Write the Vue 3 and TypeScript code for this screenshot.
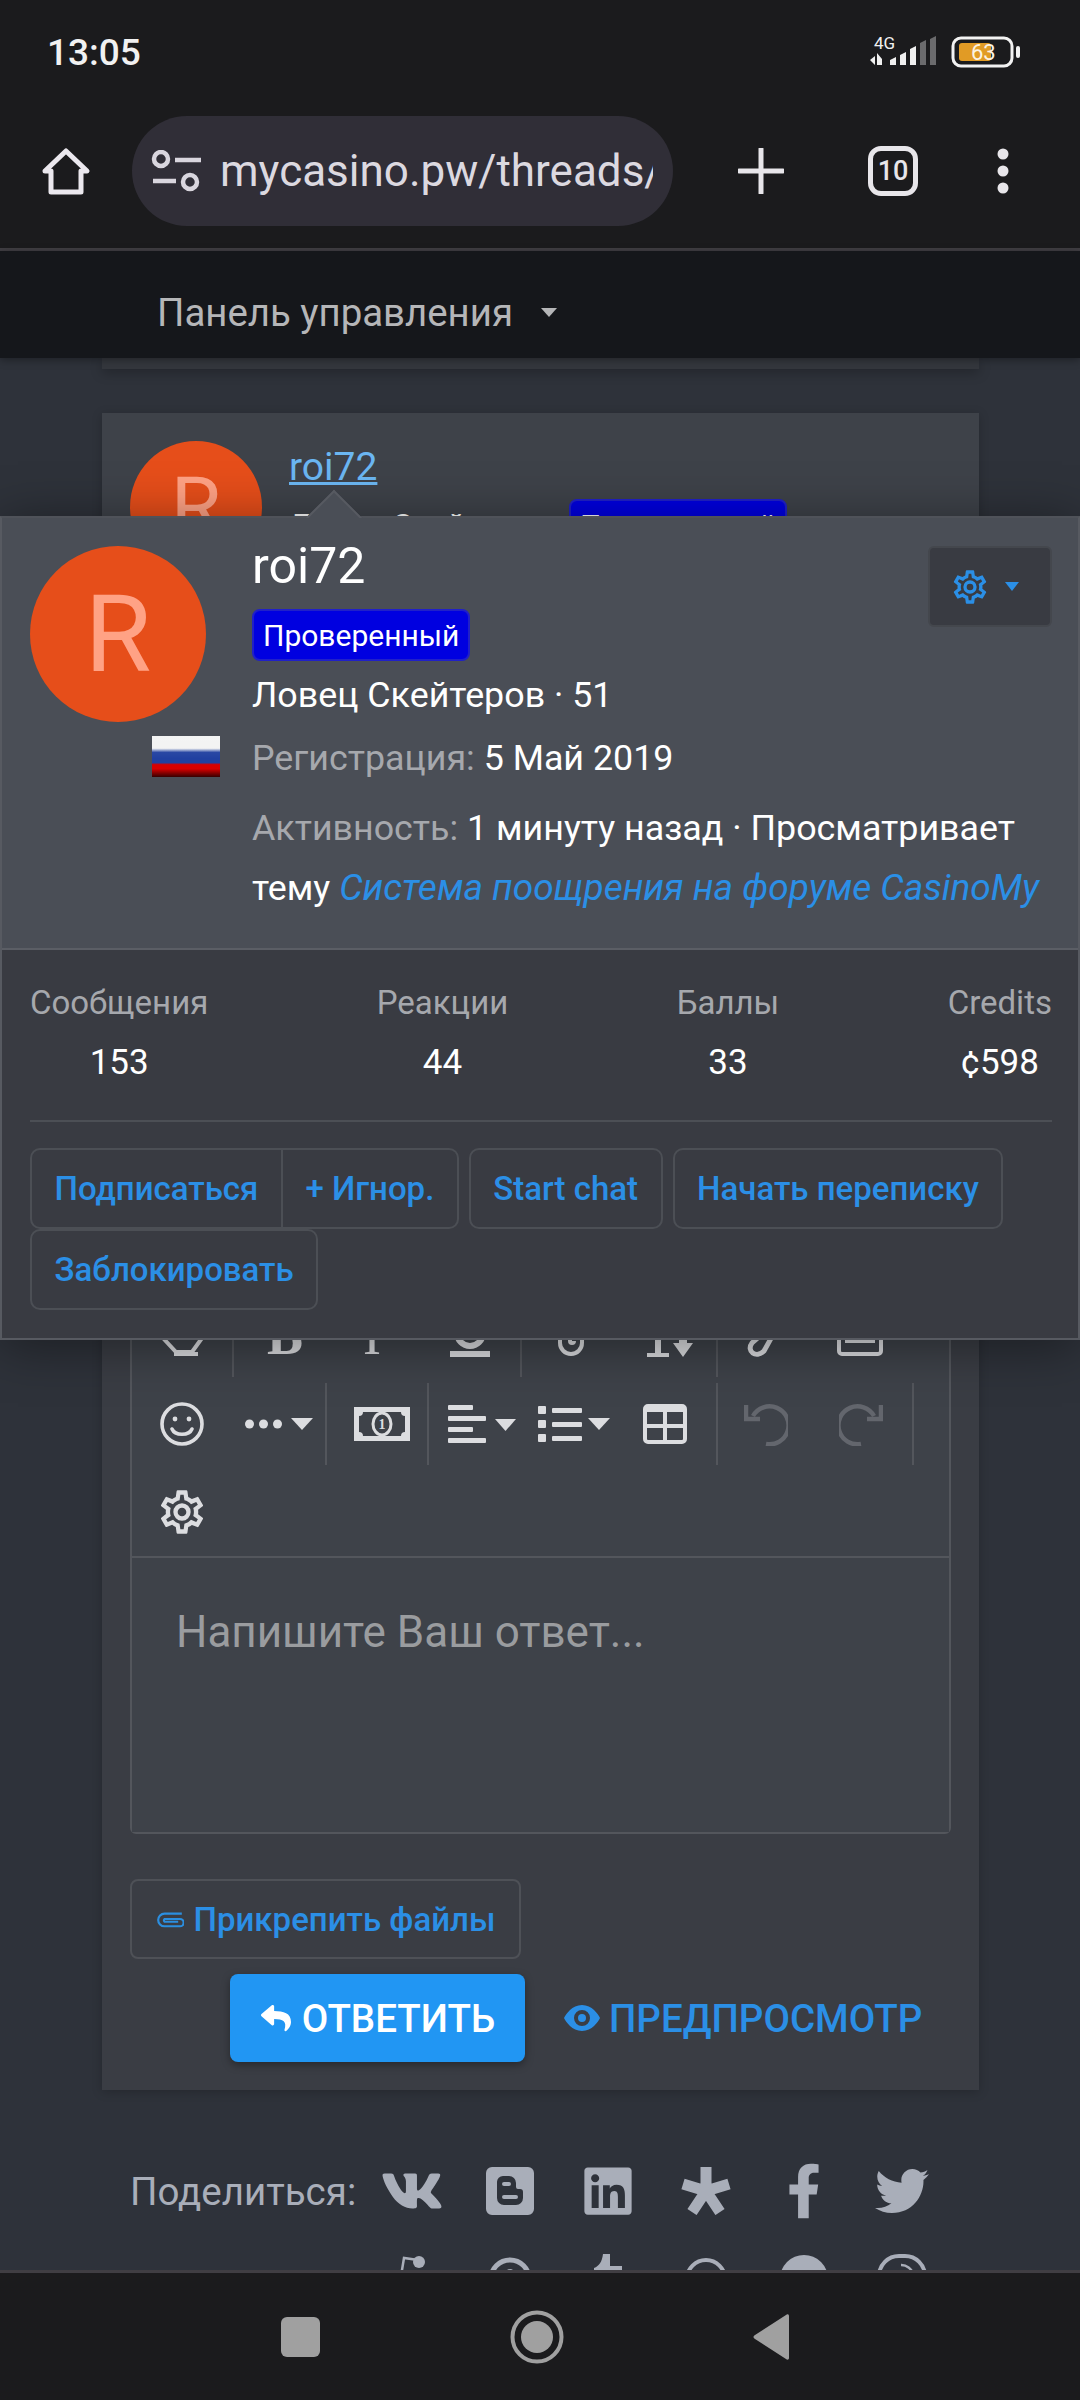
<script setup lang="ts">
const cogPath =
  'M12,8A4,4 0 0,1 16,12A4,4 0 0,1 12,16A4,4 0 0,1 8,12A4,4 0 0,1 12,8M12,10A2,2 0 0,0 10,12A2,2 0 0,0 12,14A2,2 0 0,0 14,12A2,2 0 0,0 12,10M10,22C9.75,22 9.54,21.82 9.5,21.58L9.13,18.93C8.5,18.68 7.96,18.34 7.44,17.94L4.95,18.95C4.73,19.03 4.46,18.95 4.34,18.73L2.34,15.27C2.21,15.05 2.27,14.78 2.46,14.63L4.57,12.97L4.5,12L4.57,11L2.46,9.37C2.27,9.22 2.21,8.95 2.34,8.73L4.34,5.27C4.46,5.05 4.73,4.96 4.95,5.05L7.44,6.05C7.96,5.66 8.5,5.32 9.13,5.07L9.5,2.42C9.54,2.18 9.75,2 10,2H14C14.25,2 14.46,2.18 14.5,2.42L14.87,5.07C15.5,5.32 16.04,5.66 16.56,6.05L19.05,5.05C19.27,4.96 19.54,5.05 19.66,5.27L21.66,8.73C21.79,8.95 21.73,9.22 21.54,9.37L19.43,11L19.5,12L19.43,13L21.54,14.63C21.73,14.78 21.79,15.05 21.66,15.27L19.66,18.73C19.54,18.95 19.27,19.04 19.05,18.95L16.56,17.95C16.04,18.34 15.5,18.68 14.87,18.93L14.5,21.58C14.46,21.82 14.25,22 14,22H10M11.25,4L10.88,6.61C9.68,6.86 8.62,7.5 7.85,8.39L5.44,7.35L4.69,8.65L6.8,10.2C6.4,11.37 6.4,12.64 6.8,13.8L4.68,15.36L5.43,16.66L7.86,15.62C8.63,16.5 9.68,17.14 10.87,17.38L11.24,20H12.76L13.13,17.39C14.32,17.14 15.37,16.5 16.14,15.62L18.57,16.66L19.32,15.36L17.2,13.81C17.6,12.64 17.6,11.37 17.2,10.2L19.31,8.65L18.56,7.35L16.15,8.39C15.38,7.5 14.32,6.86 13.12,6.62L12.75,4H11.25Z'

const stats = [
  { label: 'Сообщения', value: '153' },
  { label: 'Реакции', value: '44' },
  { label: 'Баллы', value: '33' },
  { label: 'Credits', value: '¢598' },
]
</script>

<template>
  <div class="phone">
    <header class="chrome">
      <div class="status">
        <span class="clock">13:05</span>
        <div class="status-icons">
          <svg width="70" height="32" viewBox="0 0 70 32">
            <text x="4" y="13" class="net">4G</text>
            <path d="M0 24l5-4v9zM7 17l5 6v6H7zM12 0z" fill="#f0f0f0" />
            <path d="M20 29v-5l6-3v8zM30 29v-10l6-3v13zM40 29V13l6-3v19z" fill="#f0f0f0" />
            <path d="M50 29V7l6-3v25z" fill="#6b6b6d" />
            <path d="M60 29V3l6-3v29z" fill="#6b6b6d" />
          </svg>
          <svg width="72" height="32" viewBox="0 0 72 32">
            <rect x="2" y="2" width="59" height="28" rx="8" fill="none" stroke="#f2f2f2" stroke-width="3" />
            <rect x="8" y="7" width="32" height="18" rx="3" fill="#e19b25" />
            <text x="20" y="24" class="batt">63</text>
            <rect x="65" y="10" width="4" height="12" rx="2" fill="#f2f2f2" />
          </svg>
        </div>
      </div>
      <div class="urlbar">
        <svg class="home" width="50" height="48" viewBox="0 0 50 48">
          <path d="M25 4L46 24H40V45H10V24H4Z" fill="none" stroke="#ebe8ee" stroke-width="5" stroke-linejoin="round" />
        </svg>
        <div class="pill">
          <svg class="tune" width="50" height="42" viewBox="0 0 50 42" fill="none" stroke="#d9d6de" stroke-width="4.5">
            <circle cx="10" cy="9" r="7" />
            <path d="M24 10H50M2 31H25" />
            <circle cx="39" cy="32" r="7" />
          </svg>
          <span class="url">mycasino.pw/threads/sistema</span>
        </div>
        <svg class="plus" width="46" height="46" viewBox="0 0 46 46">
          <path d="M23 1V45M1 23H45" stroke="#e8e6ea" stroke-width="5" stroke-linecap="round" />
        </svg>
        <div class="tabs">10</div>
        <svg class="kebab" width="14" height="46" viewBox="0 0 14 46" fill="#e8e6ea">
          <circle cx="7" cy="6" r="5.5" />
          <circle cx="7" cy="23" r="5.5" />
          <circle cx="7" cy="40" r="5.5" />
        </svg>
      </div>
    </header>

    <nav class="topnav">
      <span>Панель управления</span>
      <i class="caret"></i>
    </nav>

    <main class="content">
      <div class="prev-card"></div>

      <section class="card">
        <div class="post-head">
          <div class="avatar small">R</div>
          <div class="post-user">
            <a class="post-name">roi72</a>
            <div class="post-meta">
              <span>Ловец Скейтеров</span>
              <span class="badge">Проверенный</span>
            </div>
          </div>
        </div>

        <div class="card-body">
          <div class="editor">
            <div class="tb-row">
              <span class="tb-btn w81">
                <svg width="44" height="44" viewBox="0 0 44 44"><path d="M12 10H32L42 24 32 38 H16L3 24Z M14 40H38" fill="none" stroke="#dcdde0" stroke-width="4" /></svg>
              </span>
              <i class="sep ml10"></i>
              <span class="tb-btn w102 tb-letter bold">B</span>
              <span class="tb-btn w84 pr12 tb-letter">I</span>
              <span class="tb-btn w100">
                <svg width="42" height="46" viewBox="0 0 42 46"><path d="M8 2V20A13 13 0 0 0 34 20V2" fill="none" stroke="#dcdde0" stroke-width="6" /><rect x="1" y="38" width="40" height="6" fill="#dcdde0" /></svg>
              </span>
              <i class="sep"></i>
              <span class="tb-btn w98">
                <svg width="32" height="46" viewBox="0 0 32 46"><path d="M5 8V30A11 11 0 0 0 27 30V8A6 6 0 0 0 15 8V28A1 1 0 0 0 19 28" fill="none" stroke="#dcdde0" stroke-width="4" /></svg>
              </span>
              <span class="tb-btn w96">
                <svg width="54" height="46" viewBox="0 0 54 46" fill="#dcdde0"><path d="M14 2V40H6V44H28V40H20V2z" /><path d="M38 20V30H32L42 44 52 30H46V20z" /></svg>
              </span>
              <i class="sep"></i>
              <span class="tb-btn w84">
                <svg width="32" height="46" viewBox="0 0 32 46"><path d="M26 14L8 30C2 38 12 46 20 38L30 20" fill="none" stroke="#dcdde0" stroke-width="5" /></svg>
              </span>
              <span class="tb-btn w96 pl20">
                <svg width="46" height="40" viewBox="0 0 46 40"><rect x="2" y="2" width="42" height="36" rx="3" fill="none" stroke="#dcdde0" stroke-width="4" /><rect x="8" y="22" width="30" height="5" fill="#dcdde0" /></svg>
              </span>
            </div>

            <div class="tb-row">
              <span class="tb-btn w81">
                <svg width="44" height="44" viewBox="0 0 44 44" fill="none" stroke="#dcdde0" stroke-width="3.6">
                  <circle cx="22" cy="22" r="20" />
                  <circle cx="15" cy="17" r="2.4" fill="#dcdde0" stroke="none" />
                  <circle cx="29" cy="17" r="2.4" fill="#dcdde0" stroke="none" />
                  <path d="M12 27C15 34 29 34 32 27" stroke-linecap="round" />
                </svg>
              </span>
              <span class="tb-btn w103 end">
                <svg width="68" height="16" viewBox="0 0 68 16" fill="#dcdde0">
                  <circle cx="4.5" cy="8" r="4.5" /><circle cx="18.5" cy="8" r="4.5" /><circle cx="32.5" cy="8" r="4.5" />
                  <path d="M46 2H68L57 14z" />
                </svg>
              </span>
              <i class="sep"></i>
              <span class="tb-btn w100 pl10">
                <svg width="56" height="34" viewBox="0 0 56 34">
                  <path d="M0 0H56V34H0ZM9 5Q9 9 5 9V25Q9 25 9 29H47Q47 25 51 25V9Q47 9 47 5Z" fill="#dcdde0" fill-rule="evenodd" />
                  <ellipse cx="28" cy="17" rx="9" ry="11" fill="none" stroke="#dcdde0" stroke-width="3" />
                  <text x="28" y="22" class="bill">1</text>
                </svg>
              </span>
              <i class="sep"></i>
              <span class="tb-btn w98 pl8">
                <svg width="68" height="38" viewBox="0 0 68 38" fill="#dcdde0">
                  <rect x="0" y="0" width="25" height="5" rx="1" /><rect x="0" y="11" width="38" height="5" rx="1" />
                  <rect x="0" y="22" width="25" height="5" rx="1" /><rect x="0" y="33" width="38" height="5" rx="1" />
                  <path d="M47 14H68L57.5 26z" />
                </svg>
              </span>
              <span class="tb-btn w94">
                <svg width="72" height="36" viewBox="0 0 72 36" fill="#dcdde0">
                  <rect x="0" y="0" width="8" height="8" rx="1" /><rect x="0" y="14" width="8" height="8" rx="1" /><rect x="0" y="28" width="8" height="8" rx="1" />
                  <rect x="14" y="2" width="30" height="5" rx="1" /><rect x="14" y="16" width="30" height="5" rx="1" /><rect x="14" y="30" width="30" height="5" rx="1" />
                  <path d="M50 12H72L61 24z" />
                </svg>
              </span>
              <span class="tb-btn w95 pr7">
                <svg width="44" height="40" viewBox="0 0 44 40">
                  <rect x="2" y="2" width="40" height="36" rx="3" fill="none" stroke="#dcdde0" stroke-width="4" />
                  <path d="M2 5H42" stroke="#dcdde0" stroke-width="6" />
                  <path d="M22 6V38M2 22H42" stroke="#dcdde0" stroke-width="4" />
                </svg>
              </span>
              <i class="sep"></i>
              <span class="tb-btn w96">
                <svg width="44" height="44" viewBox="0 0 44 44" fill="none" stroke="#63666d" stroke-width="4.5">
                  <path d="M9 14A19 19 0 1 1 22 42" />
                  <path d="M2 3V17H16" />
                </svg>
              </span>
              <span class="tb-btn w94">
                <svg width="44" height="44" viewBox="0 0 44 44" fill="none" stroke="#63666d" stroke-width="4.5">
                  <path d="M35 14A19 19 0 1 0 22 42" />
                  <path d="M42 3V17H28" />
                </svg>
              </span>
              <i class="sep ml4"></i>
            </div>

            <div class="tb-row last">
              <span class="tb-btn w81">
                <svg width="52" height="52" viewBox="0 0 24 24" fill="#dcdde0"><path :d="cogPath" /></svg>
              </span>
            </div>

            <div class="textarea">Напишите Ваш ответ...</div>
          </div>

          <button class="attach">
            <svg width="28" height="20" viewBox="0 0 30 22" fill="none" stroke="#2b8fe0" stroke-width="2.4">
              <path d="M28 5H9A7 7 0 0 0 9 19H26A4 4 0 0 0 26 11H9A2 2 0 0 0 9 14H24" />
            </svg>
            Прикрепить файлы
          </button>

          <div class="actions">
            <button class="reply">
              <svg width="32" height="30" viewBox="0 0 512 512" fill="#fff">
                <path d="M8.309 189.836L184.313 37.851C199.719 24.546 224 35.347 224 56.015v80.053c160.629 1.839 288 34.032 288 186.258 0 61.441-39.581 122.309-83.333 154.132-13.653 9.931-33.111-2.533-28.077-18.631 45.344-145.012-21.507-183.51-176.59-185.742V360c0 20.7-24.3 31.453-39.687 18.164l-176.004-152c-11.071-9.562-11.086-26.753 0-36.328z" />
              </svg>
              Ответить
            </button>
            <button class="preview">
              <svg width="36" height="28" viewBox="0 0 36 28">
                <path d="M18 1C28 1 34 10 36 14 34 18 28 27 18 27S2 18 0 14C2 10 8 1 18 1ZM18 6A8 8 0 1 0 18 22 8 8 0 0 0 18 6Z" fill="#2b8fe6" fill-rule="evenodd" />
                <circle cx="18" cy="14" r="4" fill="#2b8fe6" />
              </svg>
              Предпросмотр
            </button>
          </div>
        </div>
      </section>

      <section class="share">
        <span class="share-label">Поделиться:</span>
        <span class="share-ic">
          <svg width="64" height="56" viewBox="0 0 576 512"><path d="M545 117.7c3.7-12.5 0-21.7-17.8-21.7h-58.9c-15 0-21.9 7.9-25.6 16.7 0 0-30 73.7-72.4 121.5-13.7 13.7-20 18.1-27.5 18.1-3.7 0-9.4-4.4-9.4-16.9V117.7c0-15-4.2-21.7-16.6-21.7h-92.6c-9.4 0-15 7-15 13.5 0 14.2 21.2 17.5 23.4 57.5v86.8c0 19-3.4 22.5-10.9 22.5-20 0-68.6-73.4-97.4-157.4-5.8-16.3-11.5-22.9-26.6-22.9H38.8c-16.8 0-20.2 7.9-20.2 16.7 0 15.6 20 93.1 93.1 195.5C160.4 378.1 229 416 291.4 416c37.5 0 42.1-8.4 42.1-22.9 0-66.8-3.4-73.1 15.4-73.1 8.7 0 23.7 4.4 58.7 38.1 40 40 46.6 57.9 69 57.9h58.9c16.8 0 25.3-8.4 20.4-25-11.2-34.9-86.9-106.7-90.3-111.5-8.7-11.2-6.2-16.2 0-26.2.1-.1 72-101.3 79.4-135.6z" /></svg>
        </span>
        <span class="share-ic">
          <svg width="48" height="48" viewBox="0 0 48 48"><path fill-rule="evenodd" d="M6 0H42A6 6 0 0 1 48 6V42A6 6 0 0 1 42 48H6A6 6 0 0 1 0 42V6A6 6 0 0 1 6 0ZM17 9A6 6 0 0 0 11 15V31A7 7 0 0 0 18 38H30A7 7 0 0 0 37 31V25A3 3 0 0 0 34 22H32A2 2 0 0 1 30 20V16A7 7 0 0 0 23 9ZM18 15H23A1.5 1.5 0 0 1 23 19H18A1.5 1.5 0 0 1 18 15ZM18 28H30A1.5 1.5 0 0 1 30 32H18A1.5 1.5 0 0 1 18 28Z" /></svg>
        </span>
        <span class="share-ic">
          <svg width="48" height="54" viewBox="0 0 448 512"><path d="M416 32H31.9C14.3 32 0 46.5 0 64.3v383.4C0 465.5 14.3 480 31.9 480H416c17.6 0 32-14.5 32-32.3V64.3c0-17.8-14.4-32.3-32-32.3zM135.4 416H69V202.2h66.5V416zm-33.2-243c-21.3 0-38.5-17.3-38.5-38.5S80.9 96 102.2 96c21.2 0 38.5 17.3 38.5 38.5 0 21.3-17.2 38.5-38.5 38.5zm282.1 243h-66.4V312c0-24.8-.5-56.7-34.5-56.7-34.6 0-39.9 27-39.9 54.9V416h-66.4V202.2h63.7v29.2h.9c8.9-16.8 30.6-34.5 62.9-34.5 67.2 0 79.7 44.3 79.7 101.9V416z" /></svg>
        </span>
        <span class="share-ic">
          <svg width="52" height="48" viewBox="0 0 52 48"><path d="M26 0V24M26 24L3 17M26 24L49 17M26 24L12 45M26 24L40 45" fill="none" stroke="#a9aeb9" stroke-width="11" /></svg>
        </span>
        <span class="share-ic">
          <svg width="34" height="56" viewBox="0 0 320 512"><path d="M279.14 288l14.22-92.66h-88.91v-60.13c0-25.35 12.42-50.06 52.24-50.06h40.42V6.26S260.43 0 225.36 0c-73.22 0-121.08 44.38-121.08 124.72v70.62H22.89V288h81.39v224h100.17V288z" /></svg>
        </span>
        <span class="share-ic">
          <svg width="54" height="54" viewBox="0 0 512 512"><path d="M459.37 151.716c.325 4.548.325 9.097.325 13.645 0 138.72-105.583 298.558-298.558 298.558-59.452 0-114.68-17.219-161.137-47.106 8.447.974 16.568 1.299 25.34 1.299 49.055 0 94.213-16.568 130.274-44.832-46.132-.975-84.792-31.188-98.112-72.772 6.498.974 12.995 1.624 19.818 1.624 9.421 0 18.843-1.3 27.614-3.573-48.081-9.747-84.143-51.98-84.143-102.985v-1.299c13.969 7.797 30.214 12.67 47.431 13.319-28.264-18.843-46.781-51.005-46.781-87.391 0-19.492 5.197-37.36 14.294-52.954 51.655 63.675 129.3 105.258 216.365 109.807-1.624-7.797-2.599-15.918-2.599-24.04 0-57.828 46.782-104.934 104.934-104.934 30.213 0 57.502 12.67 76.67 33.137 23.715-4.548 46.456-13.32 66.599-25.34-7.798 24.366-24.366 44.833-46.132 57.827 21.117-2.273 41.584-8.122 60.426-16.243-14.292 20.791-32.161 39.308-52.628 54.253z" /></svg>
        </span>

        <span class="share-empty"></span>
        <span class="share-ic">
          <svg width="28" height="50" viewBox="0 0 28 50"><path d="M3 22L6 4 20 6" fill="none" stroke="#a9aeb9" stroke-width="2.5" /><circle cx="21" cy="8" r="6" /></svg>
        </span>
        <span class="share-ic">
          <svg width="42" height="50" viewBox="0 0 42 50"><circle cx="21" cy="25" r="19" fill="none" stroke="#a9aeb9" stroke-width="5" /><circle cx="21" cy="20" r="5" /></svg>
        </span>
        <span class="share-ic">
          <svg width="32" height="50" viewBox="0 0 32 50"><path d="M11 0H18V12H30V24H2V14C7 12 10 8 11 0Z" /></svg>
        </span>
        <span class="share-ic">
          <svg width="42" height="50" viewBox="0 0 42 50"><circle cx="21" cy="25" r="19" fill="none" stroke="#a9aeb9" stroke-width="4" /></svg>
        </span>
        <span class="share-ic">
          <svg width="48" height="50" viewBox="0 0 48 50"><circle cx="24" cy="25" r="24" /></svg>
        </span>
        <span class="share-ic">
          <svg width="50" height="50" viewBox="0 0 50 50"><rect x="2" y="2" width="46" height="46" rx="20" fill="none" stroke="#a9aeb9" stroke-width="4" /><path d="M24 11A12 12 0 0 1 36 20" fill="none" stroke="#a9aeb9" stroke-width="2.5" /></svg>
        </span>
      </section>

      <div class="popup">
        <i class="popup-arrow"></i>
        <div class="popup-top">
          <div class="popup-left">
            <div class="avatar large">R</div>
            <div class="flag"></div>
          </div>
          <div class="popup-info">
            <div class="pop-name">roi72</div>
            <span class="badge pop-badge">Проверенный</span>
            <div class="line first">Ловец Скейтеров · 51</div>
            <div class="line"><span class="muted">Регистрация:</span> 5 Май 2019</div>
            <div class="line gap">
              <span class="muted">Активность:</span> 1 минуту назад · Просматривает тему
              <a class="thread">Система поощрения на форуме CasinoMy</a>
            </div>
          </div>
          <button class="gear-btn">
            <svg width="40" height="40" viewBox="0 0 24 24" fill="#2b8fe6"><path :d="cogPath" /></svg>
            <i class="caret blue"></i>
          </button>
        </div>

        <div class="popup-bottom">
          <div class="stats">
            <div v-for="stat in stats" :key="stat.label" class="stat">
              <div class="stat-label">{{ stat.label }}</div>
              <div class="stat-value">{{ stat.value }}</div>
            </div>
          </div>
          <div class="divider"></div>
          <div class="btns">
            <div class="btn-group">
              <button class="btn">Подписаться</button>
              <button class="btn">+ Игнор.</button>
            </div>
            <button class="btn solo">Start chat</button>
            <button class="btn solo">Начать переписку</button>
            <button class="btn solo">Заблокировать</button>
          </div>
        </div>
      </div>
    </main>

    <footer class="sysnav">
      <span class="nav-square"></span>
      <svg width="54" height="54" viewBox="0 0 54 54">
        <circle cx="27" cy="27" r="24.5" fill="none" stroke="#a0a0a0" stroke-width="4" />
        <circle cx="27" cy="27" r="16" fill="#a0a0a0" />
      </svg>
      <svg width="36" height="46" viewBox="0 0 36 46"><path d="M36 2V44C36 46 34 46 33 45L2 25C0 24 0 22 2 21L33 1C34 0 36 0 36 2Z" fill="#a0a0a0" /></svg>
    </footer>
  </div>
</template>

<style scoped>
.phone {
  width: 1080px;
  height: 2400px;
  display: flex;
  flex-direction: column;
  overflow: hidden;
  font-family: Roboto, "Liberation Sans", sans-serif;
  background: #2e323a;
  color: #fff;
}

button {
  font-family: inherit;
  cursor: pointer;
}

.chrome {
  height: 251px;
  box-sizing: border-box;
  background: #1b1b1d;
  border-bottom: 3px solid #403e43;
  flex: none;
}

.status {
  height: 104px;
  padding: 0 57px 0 47px;
  display: flex;
  align-items: center;
  justify-content: space-between;
}

.clock {
  font-size: 37px;
  font-weight: 500;
  color: #f1f1f1;
}

.status-icons {
  display: flex;
  align-items: center;
  gap: 11px;
}

.net {
  font: 400 17px Roboto, sans-serif;
  fill: #f0f0f0;
}

.batt {
  font: 400 22px Roboto, sans-serif;
  fill: #fbf3e4;
}

.urlbar {
  height: 110px;
  margin-top: 12px;
  display: flex;
  align-items: center;
  padding-left: 41px;
}

.pill {
  width: 541px;
  height: 110px;
  margin-left: 41px;
  border-radius: 55px;
  background: #302e37;
  display: flex;
  align-items: center;
  box-sizing: border-box;
  padding-left: 19px;
  padding-right: 20px;
  overflow: hidden;
  flex: none;
}

.tune {
  flex: none;
}

.url {
  margin-left: 19px;
  font-size: 44px;
  color: #dcd9e0;
  white-space: nowrap;
  overflow: hidden;
}

.plus {
  margin-left: 65px;
}

.tabs {
  width: 50px;
  height: 50px;
  margin-left: 84px;
  box-sizing: border-box;
  border: 5px solid #e8e6ea;
  border-radius: 13px;
  font-size: 27px;
  font-weight: 500;
  color: #e8e6ea;
  display: flex;
  align-items: center;
  justify-content: center;
}

.kebab {
  margin-left: 78px;
}

.topnav {
  height: 107px;
  flex: none;
  box-sizing: border-box;
  background: #15171b;
  display: flex;
  align-items: center;
  padding: 16px 0 0 157px;
  font-size: 38.4px;
  color: #b5b6b8;
  position: relative;
  z-index: 2;
  box-shadow: 0 2px 8px rgba(0, 0, 0, 0.35);
}

.caret {
  width: 0;
  height: 0;
  border-left: 8px solid transparent;
  border-right: 8px solid transparent;
  border-top: 9px solid #b5b6b8;
  margin-left: 28px;
}

.caret.blue {
  border-top-color: #2b8fe6;
  margin-left: 15px;
  border-left-width: 7px;
  border-right-width: 7px;
}

.content {
  flex: 1;
  position: relative;
  overflow: hidden;
}

.prev-card {
  margin: 0 101px 0 102px;
  height: 11px;
  background: #34373d;
  box-shadow: 0 4px 12px rgba(0, 0, 0, 0.25);
}

.card {
  margin: 44px 101px 0 102px;
  background: #393c43;
  box-shadow: 0 2px 10px rgba(0, 0, 0, 0.2);
}

.post-head {
  height: 877px;
  box-sizing: border-box;
  padding: 28px;
  background: #3e4249;
  display: flex;
  gap: 27px;
}

.avatar {
  border-radius: 50%;
  background: #e64e1a;
  color: #ffa285;
  display: flex;
  align-items: center;
  justify-content: center;
  flex: none;
}

.avatar.small {
  width: 132px;
  height: 132px;
  font-size: 82px;
}

.avatar.large {
  width: 176px;
  height: 176px;
  font-size: 108px;
}

.post-name {
  font-size: 39px;
  line-height: 52px;
  color: #6bb6f2;
  text-decoration: underline;
}

.post-meta {
  margin-top: 6px;
  display: flex;
  align-items: center;
  gap: 18px;
  font-size: 32px;
}

.badge {
  display: inline-flex;
  align-items: center;
  height: 52px;
  box-sizing: border-box;
  padding: 0 9px;
  background: #0000e0;
  border: 2px solid #2020c8;
  border-radius: 8px;
  font-size: 30px;
  color: #fff;
}

.card-body {
  padding: 0 28px 28px;
  background: #3a3d44;
}

.editor {
  background: #3e4249;
  border: 2px solid #53565c;
  border-radius: 6px;
}

.tb-row {
  height: 88px;
  display: flex;
  align-items: center;
  padding-left: 9px;
}

.tb-row.last {
  border-bottom: 2px solid #53565c;
}

.tb-btn {
  box-sizing: border-box;
  display: flex;
  align-items: center;
  justify-content: center;
  flex: none;
}

.w81 { width: 81px; }
.w84 { width: 84px; }
.w94 { width: 94px; }
.w95 { width: 95px; }
.w96 { width: 96px; }
.w98 { width: 98px; }
.w100 { width: 100px; }
.w102 { width: 102px; }
.w103 { width: 103px; }
.end { justify-content: flex-end; padding-right: 12px; }
.pl8 { padding-left: 8px; }
.pl10 { padding-left: 10px; }
.pl20 { padding-left: 20px; }
.pr7 { padding-right: 7px; }
.pr12 { padding-right: 12px; }
.ml4 { margin-left: 4px; }
.ml10 { margin-left: 10px; }

.tb-letter {
  font-family: "Liberation Serif", serif;
  font-size: 54px;
  color: #dcdde0;
}

.tb-letter.bold {
  font-weight: 700;
}

.sep {
  width: 2px;
  height: 82px;
  background: #53565c;
  flex: none;
}

.bill {
  font: 700 14px "Liberation Serif", serif;
  fill: #dcdde0;
  text-anchor: middle;
}

.textarea {
  height: 274px;
  box-sizing: border-box;
  padding: 46px 44px;
  font-size: 44px;
  line-height: 56px;
  color: #9a9c9f;
  background: #3e4249;
}

.attach {
  margin-top: 45px;
  height: 80px;
  width: 391px;
  box-sizing: border-box;
  background: transparent;
  border: 2px solid #4e5157;
  border-radius: 8px;
  display: flex;
  align-items: center;
  justify-content: center;
  gap: 10px;
  padding: 0;
  font-size: 33px;
  font-weight: 500;
  color: #2b8fe6;
}

.actions {
  margin-top: 15px;
  margin-left: 100px;
  display: flex;
  align-items: center;
  gap: 39px;
}

.reply {
  width: 295px;
  height: 88px;
  background: #2196f3;
  border: none;
  border-radius: 8px;
  box-shadow: 0 3px 8px rgba(0, 0, 0, 0.35);
  display: flex;
  align-items: center;
  justify-content: center;
  gap: 10px;
  font-size: 38.5px;
  font-weight: 500;
  color: #fff;
  text-transform: uppercase;
}

.preview {
  background: transparent;
  border: none;
  padding: 0;
  display: flex;
  align-items: center;
  gap: 9px;
  font-size: 38.5px;
  font-weight: 500;
  color: #2b8fe6;
  text-transform: uppercase;
}

.share {
  margin: 57px 0 0 130px;
  display: grid;
  grid-template-columns: 233px repeat(6, 98px);
  grid-auto-rows: 88px;
  align-items: center;
}

.share-label {
  font-size: 38.5px;
  color: #a9aeb9;
  white-space: nowrap;
}

.share-ic {
  display: flex;
  align-items: center;
  justify-content: center;
  fill: #a9aeb9;
}

.popup {
  position: absolute;
  top: 158px;
  left: 0;
  right: 0;
  height: 824px;
  box-sizing: border-box;
  border: 2px solid #575a61;
  border-top-color: #4f5259;
  background: #393b42;
  box-shadow: 0 6px 50px rgba(0, 0, 0, 0.42);
  z-index: 3;
}

.popup-arrow {
  position: absolute;
  left: 312px;
  top: -20px;
  width: 38px;
  height: 38px;
  background: #4a4e56;
  border-left: 2px solid #575a61;
  border-top: 2px solid #575a61;
  transform: rotate(45deg);
}

.popup-top {
  position: relative;
  height: 432px;
  box-sizing: border-box;
  padding: 28px 28px 0;
  background: #4a4e56;
  border-bottom: 2px solid #5b5e65;
  display: flex;
  gap: 32px;
}

.popup-left {
  width: 190px;
  display: flex;
  flex-direction: column;
  flex: none;
}

.flag {
  width: 68px;
  height: 41px;
  margin-top: 14px;
  align-self: flex-end;
  background:
    linear-gradient(180deg, rgba(255, 255, 255, 0.15) 0%, rgba(0, 0, 0, 0) 55%, rgba(0, 0, 0, 0) 80%, rgba(0, 0, 0, 0.75) 100%),
    linear-gradient(180deg, #f2f2f2 0 30%, #2140a0 40% 65%, #d80000 70% 100%);
}

.popup-info {
  margin-top: -12px;
  min-width: 0;
}

.pop-name {
  font-size: 50px;
  line-height: 64px;
}

.pop-badge {
  margin-top: 11px;
  vertical-align: top;
}

.line {
  font-size: 35.8px;
  line-height: 60px;
  margin-top: 3px;
}

.line.first {
  margin-top: 4px;
}

.line.gap {
  margin-top: 10px;
}

.muted {
  color: #a6a8ad;
}

.thread {
  color: #2b8fe6;
  font-style: italic;
  font-size: 37px;
}

.gear-btn {
  position: absolute;
  top: 28px;
  right: 26px;
  width: 124px;
  height: 81px;
  background: #393b42;
  border: 2px solid #44474d;
  border-radius: 6px;
  display: flex;
  align-items: center;
  justify-content: center;
  padding: 0 12px 0 0;
}

.popup-bottom {
  padding: 24px 26px 0 28px;
}

.stats {
  display: flex;
  justify-content: space-between;
}

.stat {
  text-align: center;
}

.stat-label {
  font-size: 33px;
  line-height: 58px;
  color: #a6a8ad;
}

.stat-value {
  font-size: 35px;
  line-height: 58px;
  margin-top: 2px;
}

.divider {
  height: 2px;
  background: #4c4f55;
  margin-top: 28px;
}

.btns {
  display: flex;
  flex-wrap: wrap;
  gap: 0 10px;
  margin-top: 26px;
}

.btn-group {
  display: flex;
}

.btn {
  height: 81px;
  box-sizing: border-box;
  padding: 0 22.5px;
  background: transparent;
  border: 2px solid #4c4f55;
  font-size: 33px;
  font-weight: 500;
  color: #2b8fe6;
  white-space: nowrap;
}

.btn.solo {
  border-radius: 10px;
}

.btn-group .btn:first-child {
  border-radius: 10px 0 0 10px;
}

.btn-group .btn:last-child {
  border-left: none;
  border-radius: 0 10px 10px 0;
}

.sysnav {
  height: 130px;
  flex: none;
  box-sizing: border-box;
  background: #1b1b1d;
  border-top: 3px solid #403e43;
  display: flex;
  align-items: center;
  padding-left: 281px;
  position: relative;
  z-index: 4;
}

.nav-square {
  width: 39px;
  height: 40px;
  border-radius: 6px;
  background: #a0a0a0;
  margin-right: 190px;
}

.sysnav svg:last-child {
  margin-left: 189px;
}
</style>

<style>
html,
body {
  margin: 0;
  background: #2e323a;
}
</style>
